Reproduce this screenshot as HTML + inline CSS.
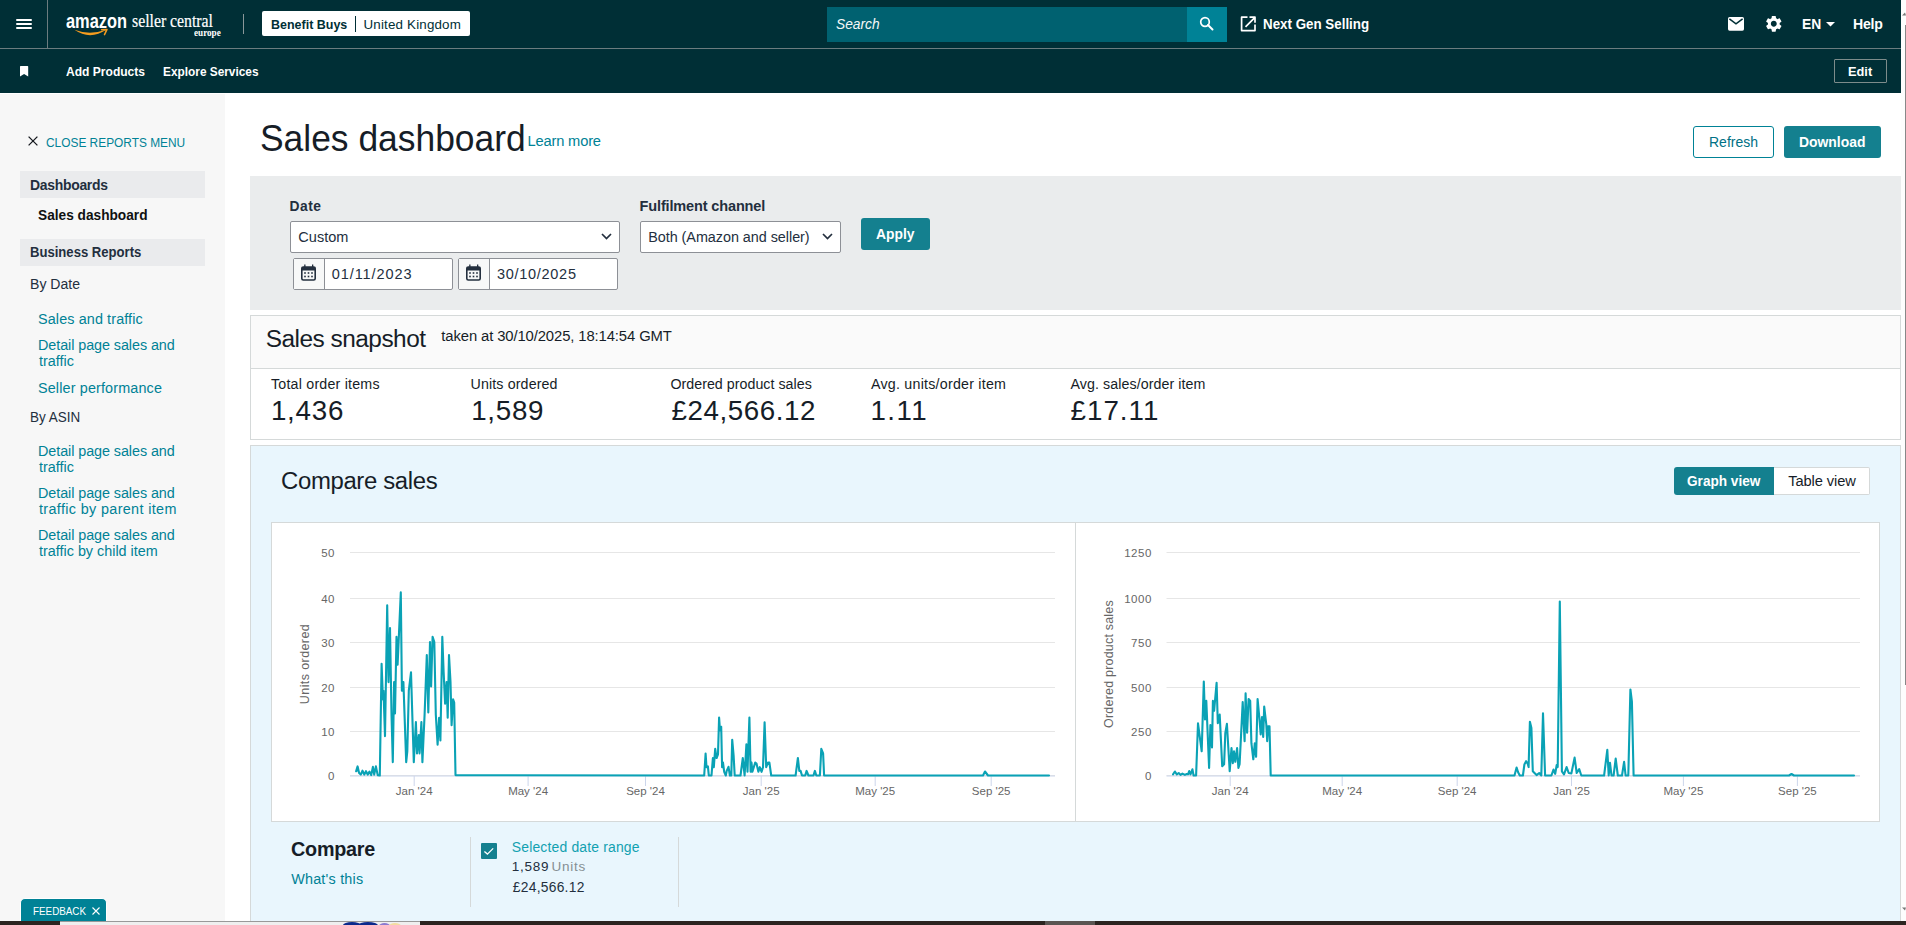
<!DOCTYPE html>
<html><head><meta charset="utf-8"><title>Sales dashboard</title>
<style>
html,body{margin:0;padding:0;width:1906px;height:925px;overflow:hidden;background:#fff;}
body{position:relative;font-family:"Liberation Sans",sans-serif;}
.a{position:absolute;}
.t{position:absolute;line-height:1;white-space:nowrap;}
svg{overflow:visible}
</style></head><body>
<div class="a" style="left:0px;top:0px;width:1901px;height:93px;background:#002f36"></div>
<div class="a" style="left:0px;top:48px;width:1901px;height:1px;background:#6c7c7f"></div>
<div class="a" style="left:47px;top:0px;width:1px;height:48px;background:#6c7c7f"></div>
<div class="a" style="left:16px;top:19px;width:16px;height:2px;background:#fff;border-radius:1px"></div>
<div class="a" style="left:16px;top:23px;width:16px;height:2px;background:#fff;border-radius:1px"></div>
<div class="a" style="left:16px;top:27px;width:16px;height:2px;background:#fff;border-radius:1px"></div>
<div class="t" style="left:66px;top:10.6px;font-size:20px;font-weight:700;color:#fff;transform:scaleX(0.82);transform-origin:0 0;">amazon</div>
<svg class="a" style="left:73px;top:27.6px" width="40" height="12" viewBox="0 0 40 12"><path d="M1.4 1.8 Q17 12.6 33.6 1.6 Q17 7.8 1.4 1.8 Z" fill="#f59c1f"/><path d="M28.6 1.7 L34 1.4 L31.5 6.6" stroke="#f59c1f" stroke-width="1.5" fill="none" stroke-linecap="round" stroke-linejoin="round"/></svg>
<div class="t" style="left:131.6px;top:11.1px;font-family:'Liberation Serif',serif;font-size:19px;color:#fff;transform:scaleX(0.83);transform-origin:0 0;-webkit-text-stroke:0.2px #fff;">seller central</div>
<div class="t" style="left:194px;top:26.7px;font-family:'Liberation Serif',serif;font-size:11px;font-weight:700;color:#fff;transform:scaleX(0.83);transform-origin:0 0;">europe</div>
<div class="a" style="left:243px;top:14px;width:1px;height:20px;background:#8a9799"></div>
<div class="a" style="left:262px;top:11px;width:208px;height:25px;background:#fff;border-radius:2px"></div>
<div class="t" style="left:270.70px;top:18px;color:#002f36;font-size:13.37px;font-weight:700;transform:scaleX(0.9339);transform-origin:0 0;">Benefit Buys</div>
<div class="a" style="left:355px;top:16px;width:1px;height:16px;background:#002f36"></div>
<div class="t" style="left:363.50px;top:18px;color:#002f36;font-size:13.37px;letter-spacing:0.177px;">United Kingdom</div>
<div class="a" style="left:827px;top:7px;width:360px;height:35px;background:#006170"></div>
<div class="a" style="left:1187px;top:7px;width:40px;height:35px;background:#008296"></div>
<div class="t" style="left:836.00px;top:17px;color:#f4f8f8;font-size:14.68px;font-style:italic;transform:scaleX(0.9371);transform-origin:0 0;">Search</div>
<svg class="a" style="left:1197px;top:14px" width="20" height="20" viewBox="0 0 20 20"><circle cx="8" cy="8" r="4.3" stroke="#fff" stroke-width="1.7" fill="none"/><path d="M11 11 L15.5 15.5" stroke="#fff" stroke-width="2" stroke-linecap="round"/></svg>
<svg class="a" style="left:1240px;top:16px" width="17" height="16" viewBox="0 0 17 16"><path d="M7.5 1.2 H1.6 V14.6 H15 V8.5" stroke="#fff" stroke-width="1.7" fill="none" stroke-linejoin="round"/><path d="M5.5 10.8 L14.5 1.8 M9.5 1.2 H15 V6.7" stroke="#fff" stroke-width="1.7" fill="none" stroke-linejoin="round"/></svg>
<div class="t" style="left:1263.30px;top:17px;color:#fff;font-size:14.83px;font-weight:700;transform:scaleX(0.9006);transform-origin:0 0;">Next Gen Selling</div>
<svg class="a" style="left:1728px;top:17px" width="16" height="14" viewBox="0 0 16 14"><rect x="0" y="0" width="16" height="13.7" rx="1.6" fill="#fff"/><path d="M1.4 1.9 L8 6.9 L14.6 1.9" stroke="#002f36" stroke-width="1.5" fill="none"/></svg>
<svg class="a" style="left:1764px;top:14.2px" width="19.6" height="19.6" viewBox="0 0 24 24"><path fill="#fff" d="M19.14 12.94c.04-.3.06-.61.06-.94 0-.32-.02-.64-.07-.94l2.03-1.58a.49.49 0 0 0 .12-.61l-1.92-3.32a.488.488 0 0 0-.59-.22l-2.39.96c-.5-.38-1.03-.7-1.62-.94l-.36-2.540a.484.484 0 0 0-.48-.41h-3.84c-.24 0-.43.17-.47.41l-.36 2.54c-.59.24-1.130.57-1.62.94l-2.39-.96c-.22-.08-.47 0-.59.22L2.74 8.87c-.12.21-.08.47.12.61l2.03 1.58c-.05.3-.09.63-.09.94s.02.64.07.94l-2.03 1.58a.49.49 0 0 0-.12.61l1.92 3.32c.12.22.37.29.59.22l2.39-.96c.5.38 1.03.7 1.62.94l.36 2.54c.05.24.24.41.48.41h3.84c.24 0 .44-.17.47-.41l.36-2.54c.59-.24 1.13-.56 1.62-.94l2.39.96c.22.08.47 0 .59-.22l1.92-3.32c.12-.22.07-.47-.12-.61l-2.010-1.58zM12 15.6c-1.98 0-3.6-1.62-3.6-3.6s1.62-3.6 3.6-3.6 3.6 1.62 3.6 3.6-1.62 3.6-3.6 3.6z"/></svg>
<div class="t" style="left:1801.90px;top:18px;color:#fff;font-size:13.95px;font-weight:700;transform:scaleX(0.9943);transform-origin:0 0;">EN</div>
<svg class="a" style="left:1825.5px;top:22px" width="9" height="5" viewBox="0 0 9 5"><path d="M0 0 H9 L4.5 4.5 Z" fill="#fff"/></svg>
<div class="t" style="left:1852.90px;top:17px;color:#fff;font-size:14.1px;font-weight:700;letter-spacing:-0.173px;">Help</div>
<svg class="a" style="left:20px;top:65.7px" width="8.2" height="11" viewBox="0 0 8.2 11"><path d="M0 0.5 Q0 0 0.5 0 H7.7 Q8.2 0 8.2 0.5 V10.5 L4.1 8 L0 10.5 Z" fill="#fff"/></svg>
<div class="t" style="left:66.10px;top:65px;color:#fff;font-size:13.23px;font-weight:700;transform:scaleX(0.9120);transform-origin:0 0;">Add Products</div>
<div class="t" style="left:162.60px;top:65px;color:#fff;font-size:13.23px;font-weight:700;transform:scaleX(0.8966);transform-origin:0 0;">Explore Services</div>
<div class="a" style="left:1834px;top:59px;width:53px;height:24px;border:1px solid #7d8c8b;box-sizing:border-box;border-radius:1px"></div>
<div class="t" style="left:1848.30px;top:65px;color:#fff;font-size:13.37px;font-weight:700;transform:scaleX(0.9569);transform-origin:0 0;">Edit</div>
<div class="a" style="left:1901px;top:0px;width:5px;height:925px;background:#fdfdfd"></div>
<div class="a" style="left:1905px;top:25px;width:1px;height:660px;background:#888"></div>
<svg class="a" style="left:1902px;top:12px" width="4" height="4" viewBox="0 0 4 4"><path d="M0 3.5 L3 0.5 L4 3.5Z" fill="#777"/></svg>
<svg class="a" style="left:1902px;top:907px" width="4" height="4" viewBox="0 0 4 4"><path d="M0 0.5 L3 3.5 L4 0.5Z" fill="#777"/></svg>
<div class="a" style="left:0px;top:94px;width:225px;height:831px;background:#f7f7f7"></div>
<svg class="a" style="left:28px;top:136px" width="10" height="10" viewBox="0 0 10 10"><path d="M0.6 0.6 L9.4 9.4 M9.4 0.6 L0.6 9.4" stroke="#16191f" stroke-width="1.3"/></svg>
<div class="t" style="left:45.90px;top:136px;color:#008296;font-size:13.08px;transform:scaleX(0.9093);transform-origin:0 0;">CLOSE REPORTS MENU</div>
<div class="a" style="left:20px;top:171px;width:185px;height:27px;background:#eaebed"></div>
<div class="t" style="left:30.00px;top:179px;color:#232f3e;font-size:13.95px;font-weight:700;letter-spacing:-0.285px;">Dashboards</div>
<div class="t" style="left:37.80px;top:208px;color:#0f1111;font-size:14.53px;font-weight:700;transform:scaleX(0.9428);transform-origin:0 0;">Sales dashboard</div>
<div class="a" style="left:20px;top:239px;width:185px;height:27px;background:#eaebed"></div>
<div class="t" style="left:29.60px;top:245px;color:#232f3e;font-size:14.24px;font-weight:700;transform:scaleX(0.9196);transform-origin:0 0;">Business Reports</div>
<div class="t" style="left:29.70px;top:277px;color:#232f3e;font-size:14.53px;transform:scaleX(0.9691);transform-origin:0 0;">By Date</div>
<div class="t" style="left:38.00px;top:312px;color:#008296;font-size:14.39px;letter-spacing:0.119px;">Sales and traffic</div>
<div class="t" style="left:38.00px;top:338px;color:#008296;font-size:14.39px;letter-spacing:-0.074px;">Detail page sales and</div>
<div class="t" style="left:39.00px;top:354px;color:#008296;font-size:14.39px;">traffic</div>
<div class="t" style="left:38.00px;top:381px;color:#008296;font-size:14.39px;letter-spacing:0.145px;">Seller performance</div>
<div class="t" style="left:29.60px;top:411px;color:#232f3e;font-size:13.95px;transform:scaleX(0.9654);transform-origin:0 0;">By ASIN</div>
<div class="t" style="left:38.00px;top:444px;color:#008296;font-size:14.39px;letter-spacing:-0.074px;">Detail page sales and</div>
<div class="t" style="left:39.00px;top:460px;color:#008296;font-size:14.39px;">traffic</div>
<div class="t" style="left:38.00px;top:486px;color:#008296;font-size:14.39px;letter-spacing:-0.074px;">Detail page sales and</div>
<div class="t" style="left:39.00px;top:502px;color:#008296;font-size:14.39px;letter-spacing:0.353px;">traffic by parent item</div>
<div class="t" style="left:38.00px;top:528px;color:#008296;font-size:14.39px;letter-spacing:-0.074px;">Detail page sales and</div>
<div class="t" style="left:39.00px;top:544px;color:#008296;font-size:14.39px;">traffic by child item</div>
<div class="t" style="left:259.60px;top:120px;color:#161d27;font-size:37.5px;transform:scaleX(0.9440);transform-origin:0 0;">Sales dashboard</div>
<div class="t" style="left:527.60px;top:134px;color:#008296;font-size:14.68px;letter-spacing:-0.181px;">Learn more</div>
<div class="a" style="left:1693px;top:126px;width:81px;height:32px;border:1px solid #008296;border-radius:3px;box-sizing:border-box;background:#fff"></div>
<div class="t" style="left:1708.90px;top:135px;color:#007185;font-size:14.97px;transform:scaleX(0.9348);transform-origin:0 0;">Refresh</div>
<div class="a" style="left:1784px;top:126px;width:97px;height:32px;background:#14808f;border-radius:3px"></div>
<div class="t" style="left:1799.20px;top:135px;color:#fff;font-size:14.97px;font-weight:700;transform:scaleX(0.9292);transform-origin:0 0;">Download</div>
<div class="a" style="left:250px;top:176px;width:1651px;height:134px;background:#eaeced"></div>
<div class="t" style="left:289.60px;top:200px;color:#232f3e;font-size:13.81px;font-weight:700;letter-spacing:0.452px;">Date</div>
<div class="a" style="left:290px;top:221px;width:330px;height:32px;background:#fff;border:1px solid #8d9096;border-radius:2px;box-sizing:border-box"></div>
<div class="t" style="left:298.30px;top:230px;color:#232f3e;font-size:14.53px;letter-spacing:0.029px;">Custom</div>
<svg class="a" style="left:600.5px;top:232.5px" width="11" height="7" viewBox="0 0 11 7"><path d="M1 1 L5.5 5.5 L10 1" stroke="#232f3e" stroke-width="1.7" fill="none"/></svg>
<div class="a" style="left:293px;top:258px;width:160px;height:32px;background:#fff;border:1px solid #8d9096;border-radius:2px;box-sizing:border-box"></div>
<div class="a" style="left:294px;top:259px;width:30px;height:30px;background:#f7f8f8"></div>
<div class="a" style="left:324px;top:259px;width:1px;height:30px;background:#8d9096"></div>
<svg class="a" style="left:301px;top:264px" width="15" height="17" viewBox="0 0 15 17"><rect x="0.8" y="3" width="13.4" height="13" rx="1.5" fill="none" stroke="#232f3e" stroke-width="1.6"/><rect x="0.8" y="3" width="13.4" height="3.5" fill="#232f3e"/><rect x="3.2" y="0.5" width="1.3" height="3.5" fill="#232f3e"/><rect x="11" y="0.5" width="1.3" height="3.5" fill="#232f3e"/><g fill="#232f3e"><rect x="3.2" y="8.2" width="1.6" height="1.6"/><rect x="6.7" y="8.2" width="1.6" height="1.6"/><rect x="10.2" y="8.2" width="1.6" height="1.6"/><rect x="3.2" y="11.7" width="1.6" height="1.6"/><rect x="6.7" y="11.7" width="1.6" height="1.6"/><rect x="10.2" y="11.7" width="1.6" height="1.6"/></g></svg>
<div class="t" style="left:331.70px;top:267px;color:#232f3e;font-size:14.53px;letter-spacing:0.934px;">01/11/2023</div>
<div class="a" style="left:458px;top:258px;width:160px;height:32px;background:#fff;border:1px solid #8d9096;border-radius:2px;box-sizing:border-box"></div>
<div class="a" style="left:459px;top:259px;width:30px;height:30px;background:#f7f8f8"></div>
<div class="a" style="left:489px;top:259px;width:1px;height:30px;background:#8d9096"></div>
<svg class="a" style="left:466px;top:264px" width="15" height="17" viewBox="0 0 15 17"><rect x="0.8" y="3" width="13.4" height="13" rx="1.5" fill="none" stroke="#232f3e" stroke-width="1.6"/><rect x="0.8" y="3" width="13.4" height="3.5" fill="#232f3e"/><rect x="3.2" y="0.5" width="1.3" height="3.5" fill="#232f3e"/><rect x="11" y="0.5" width="1.3" height="3.5" fill="#232f3e"/><g fill="#232f3e"><rect x="3.2" y="8.2" width="1.6" height="1.6"/><rect x="6.7" y="8.2" width="1.6" height="1.6"/><rect x="10.2" y="8.2" width="1.6" height="1.6"/><rect x="3.2" y="11.7" width="1.6" height="1.6"/><rect x="6.7" y="11.7" width="1.6" height="1.6"/><rect x="10.2" y="11.7" width="1.6" height="1.6"/></g></svg>
<div class="t" style="left:497.00px;top:267px;color:#232f3e;font-size:14.53px;letter-spacing:0.702px;">30/10/2025</div>
<div class="t" style="left:639.60px;top:199px;color:#232f3e;font-size:14.53px;font-weight:700;letter-spacing:-0.149px;">Fulfilment channel</div>
<div class="a" style="left:640px;top:221px;width:201px;height:32px;background:#fff;border:1px solid #8d9096;border-radius:2px;box-sizing:border-box"></div>
<div class="t" style="left:648.20px;top:230px;color:#232f3e;font-size:14.39px;letter-spacing:-0.032px;">Both (Amazon and seller)</div>
<svg class="a" style="left:821.5px;top:233px" width="11" height="7" viewBox="0 0 11 7"><path d="M1 1 L5.5 5.5 L10 1" stroke="#232f3e" stroke-width="1.7" fill="none"/></svg>
<div class="a" style="left:861px;top:218px;width:69px;height:32px;background:#14808f;border-radius:3px"></div>
<div class="t" style="left:876.00px;top:227px;color:#fff;font-size:14.97px;font-weight:700;transform:scaleX(0.9247);transform-origin:0 0;">Apply</div>
<div class="a" style="left:250px;top:315px;width:1651px;height:125px;background:#fff;border:1px solid #d5d9d9;box-sizing:border-box"></div>
<div class="a" style="left:251px;top:316px;width:1649px;height:52px;background:#fafafa"></div>
<div class="a" style="left:251px;top:368px;width:1649px;height:1px;background:#d5d9d9"></div>
<div class="t" style="left:265.80px;top:327px;color:#161d27;font-size:24.42px;letter-spacing:-0.514px;">Sales snapshot</div>
<div class="t" style="left:441.30px;top:329px;color:#161d27;font-size:14.83px;letter-spacing:-0.111px;">taken at 30/10/2025, 18:14:54 GMT</div>
<div class="t" style="left:271.00px;top:377px;color:#161d27;font-size:14.24px;letter-spacing:0.209px;">Total order items</div>
<div class="t" style="left:270.90px;top:397px;color:#161d27;font-size:27.76px;letter-spacing:0.749px;">1,436</div>
<div class="t" style="left:470.50px;top:377px;color:#161d27;font-size:14.24px;letter-spacing:0.130px;">Units ordered</div>
<div class="t" style="left:471.20px;top:397px;color:#161d27;font-size:27.76px;letter-spacing:0.724px;">1,589</div>
<div class="t" style="left:670.40px;top:377px;color:#161d27;font-size:14.24px;letter-spacing:0.027px;">Ordered product sales</div>
<div class="t" style="left:671.60px;top:397px;color:#161d27;font-size:27.76px;letter-spacing:0.545px;">£24,566.12</div>
<div class="t" style="left:871.00px;top:377px;color:#161d27;font-size:14.24px;letter-spacing:0.234px;">Avg. units/order item</div>
<div class="t" style="left:870.50px;top:397px;color:#161d27;font-size:27.76px;letter-spacing:1.393px;">1.11</div>
<div class="t" style="left:1070.50px;top:377px;color:#161d27;font-size:14.24px;letter-spacing:0.075px;">Avg. sales/order item</div>
<div class="t" style="left:1070.60px;top:397px;color:#161d27;font-size:27.76px;letter-spacing:0.981px;">£17.11</div>
<div class="a" style="left:250px;top:445px;width:1651px;height:480px;background:#e9f6fd;border:1px solid #d5d9d9;border-bottom:none;box-sizing:border-box"></div>
<div class="t" style="left:281.00px;top:469px;color:#161d27;font-size:23.91px;letter-spacing:-0.339px;">Compare sales</div>
<div class="a" style="left:1674px;top:467px;width:100px;height:28px;background:#14808f;border-radius:3px 0 0 3px"></div>
<div class="t" style="left:1687.30px;top:474px;color:#fff;font-size:14.68px;font-weight:700;transform:scaleX(0.9275);transform-origin:0 0;">Graph view</div>
<div class="a" style="left:1774px;top:467px;width:96px;height:28px;background:#fff;border:1px solid #d5d9d9;border-left:none;border-radius:0 2px 2px 0;box-sizing:border-box"></div>
<div class="t" style="left:1788.30px;top:474px;color:#161d27;font-size:14.68px;letter-spacing:-0.109px;">Table view</div>
<div class="a" style="left:271px;top:522px;width:1609px;height:300px;background:#fff;border:1px solid #d5d9d9;box-sizing:border-box"></div>
<div class="a" style="left:1075px;top:523px;width:1px;height:298px;background:#d5d9d9"></div>
<svg class="a" style="left:0;top:0" width="1906" height="925" viewBox="0 0 1906 925" font-family="Liberation Sans, sans-serif"><line x1="350" y1="552.5" x2="1055" y2="552.5" stroke="#e6e6e6" stroke-width="1"/><line x1="350" y1="598.5" x2="1055" y2="598.5" stroke="#e6e6e6" stroke-width="1"/><line x1="350" y1="642.5" x2="1055" y2="642.5" stroke="#e6e6e6" stroke-width="1"/><line x1="350" y1="687.5" x2="1055" y2="687.5" stroke="#e6e6e6" stroke-width="1"/><line x1="350" y1="731.5" x2="1055" y2="731.5" stroke="#e6e6e6" stroke-width="1"/><line x1="350" y1="775.5" x2="1055" y2="775.5" stroke="#e6e6e6" stroke-width="1"/><line x1="350" y1="776" x2="1055" y2="776" stroke="#ccd6eb" stroke-width="1"/><text x="335" y="557.1" text-anchor="end" font-size="11.5" fill="#666666" letter-spacing="0.5">50</text><text x="335" y="603.1" text-anchor="end" font-size="11.5" fill="#666666" letter-spacing="0.5">40</text><text x="335" y="647.1" text-anchor="end" font-size="11.5" fill="#666666" letter-spacing="0.5">30</text><text x="335" y="692.1" text-anchor="end" font-size="11.5" fill="#666666" letter-spacing="0.5">20</text><text x="335" y="736.1" text-anchor="end" font-size="11.5" fill="#666666" letter-spacing="0.5">10</text><text x="335" y="780.1" text-anchor="end" font-size="11.5" fill="#666666" letter-spacing="0.5">0</text><line x1="414.2" y1="776" x2="414.2" y2="786" stroke="#ccd6eb" stroke-width="1"/><text x="414.2" y="795" text-anchor="middle" font-size="11.5" fill="#666666">Jan '24</text><line x1="528.1" y1="776" x2="528.1" y2="786" stroke="#ccd6eb" stroke-width="1"/><text x="528.1" y="795" text-anchor="middle" font-size="11.5" fill="#666666">May '24</text><line x1="645.5" y1="776" x2="645.5" y2="786" stroke="#ccd6eb" stroke-width="1"/><text x="645.5" y="795" text-anchor="middle" font-size="11.5" fill="#666666">Sep '24</text><line x1="761.2" y1="776" x2="761.2" y2="786" stroke="#ccd6eb" stroke-width="1"/><text x="761.2" y="795" text-anchor="middle" font-size="11.5" fill="#666666">Jan '25</text><line x1="875.2" y1="776" x2="875.2" y2="786" stroke="#ccd6eb" stroke-width="1"/><text x="875.2" y="795" text-anchor="middle" font-size="11.5" fill="#666666">May '25</text><line x1="991.2" y1="776" x2="991.2" y2="786" stroke="#ccd6eb" stroke-width="1"/><text x="991.2" y="795" text-anchor="middle" font-size="11.5" fill="#666666">Sep '25</text><text transform="translate(308.5,664) rotate(-90)" text-anchor="middle" font-size="12.5" fill="#666666" letter-spacing="0.4">Units ordered</text><path d="M356.5 771.0 L356.1 771.2 L357.6 766.4 L359.1 772.9 L360.8 774.6 L362.5 770.7 L364.3 774.6 L366.0 771.2 L367.7 774.6 L369.5 771.6 L371.2 775.1 L372.9 766.9 L374.2 774.6 L375.9 766.4 L377.7 775.1 L379.8 775.5 L381.6 663.7 L382.9 699.4 L383.5 690.7 L385.0 736.1 L387.2 605.3 L388.5 682.1 L390.0 628.0 L391.5 714.5 L392.8 762.1 L394.1 682.1 L395.0 713.4 L396.5 636.7 L397.6 664.8 L400.8 592.4 L401.9 690.7 L403.4 682.1 L406.2 762.1 L407.3 751.3 L408.8 690.7 L411.0 672.4 L412.7 727.5 L413.8 762.1 L415.9 722.1 L417.0 753.4 L418.8 735.1 L419.6 753.4 L421.4 722.1 L422.4 762.1 L424.6 714.5 L426.8 655.1 L428.3 712.4 L430.0 642.1 L431.1 686.4 L432.6 636.7 L434.3 642.1 L435.8 714.5 L437.6 744.8 L439.1 717.8 L440.4 740.5 L442.3 636.7 L443.6 671.3 L445.1 703.7 L446.6 682.1 L447.7 717.8 L449.0 655.1 L450.5 682.1 L451.6 725.3 L453.1 699.4 L454.2 702.6 L455.5 775.1 L704.2 775.5 L705.6 753.5 L706.5 767.2 L707.9 766.3 L708.8 775.5 L711.5 775.5 L712.9 758.0 L713.8 767.2 L715.2 748.9 L716.6 758.0 L718.0 754.4 L719.1 717.6 L720.0 730.5 L721.2 726.8 L722.1 767.2 L723.0 762.6 L724.2 771.8 L725.8 775.5 L726.7 770.9 L728.5 766.8 L729.9 775.5 L731.3 775.5 L732.2 739.7 L733.6 755.3 L734.7 775.5 L740.5 775.5 L742.8 758.0 L744.6 775.5 L746.4 744.3 L747.5 771.8 L749.4 717.6 L750.6 771.8 L751.5 762.6 L752.4 771.8 L755.2 762.6 L756.5 763.6 L758.4 771.8 L759.8 767.2 L761.6 771.8 L763.0 767.2 L764.6 722.2 L766.2 767.2 L768.0 762.6 L769.4 762.6 L771.2 775.5 L795.6 775.5 L797.9 758.0 L799.3 770.9 L800.6 770.9 L802.0 775.5 L805.2 775.5 L806.6 770.9 L808.4 775.5 L813.5 775.5 L814.9 770.9 L816.3 775.5 L819.9 775.5 L821.3 748.9 L823.1 753.5 L824.1 775.5 L983.0 775.5 L985.0 771.5 L988.0 775.5 L1049.0 775.5" fill="none" stroke="#0aa2b5" stroke-width="2.1" stroke-linejoin="round" stroke-linecap="round"/><line x1="1166.5" y1="552.5" x2="1860" y2="552.5" stroke="#e6e6e6" stroke-width="1"/><line x1="1166.5" y1="598.5" x2="1860" y2="598.5" stroke="#e6e6e6" stroke-width="1"/><line x1="1166.5" y1="642.5" x2="1860" y2="642.5" stroke="#e6e6e6" stroke-width="1"/><line x1="1166.5" y1="687.5" x2="1860" y2="687.5" stroke="#e6e6e6" stroke-width="1"/><line x1="1166.5" y1="731.5" x2="1860" y2="731.5" stroke="#e6e6e6" stroke-width="1"/><line x1="1166.5" y1="775.5" x2="1860" y2="775.5" stroke="#e6e6e6" stroke-width="1"/><line x1="1166.5" y1="776" x2="1860" y2="776" stroke="#ccd6eb" stroke-width="1"/><text x="1151.8" y="557.1" text-anchor="end" font-size="11.5" fill="#666666" letter-spacing="0.5">1250</text><text x="1151.8" y="603.1" text-anchor="end" font-size="11.5" fill="#666666" letter-spacing="0.5">1000</text><text x="1151.8" y="647.1" text-anchor="end" font-size="11.5" fill="#666666" letter-spacing="0.5">750</text><text x="1151.8" y="692.1" text-anchor="end" font-size="11.5" fill="#666666" letter-spacing="0.5">500</text><text x="1151.8" y="736.1" text-anchor="end" font-size="11.5" fill="#666666" letter-spacing="0.5">250</text><text x="1151.8" y="780.1" text-anchor="end" font-size="11.5" fill="#666666" letter-spacing="0.5">0</text><line x1="1230.2" y1="776" x2="1230.2" y2="786" stroke="#ccd6eb" stroke-width="1"/><text x="1230.2" y="795" text-anchor="middle" font-size="11.5" fill="#666666">Jan '24</text><line x1="1342.2" y1="776" x2="1342.2" y2="786" stroke="#ccd6eb" stroke-width="1"/><text x="1342.2" y="795" text-anchor="middle" font-size="11.5" fill="#666666">May '24</text><line x1="1457.2" y1="776" x2="1457.2" y2="786" stroke="#ccd6eb" stroke-width="1"/><text x="1457.2" y="795" text-anchor="middle" font-size="11.5" fill="#666666">Sep '24</text><line x1="1571.5" y1="776" x2="1571.5" y2="786" stroke="#ccd6eb" stroke-width="1"/><text x="1571.5" y="795" text-anchor="middle" font-size="11.5" fill="#666666">Jan '25</text><line x1="1683.4" y1="776" x2="1683.4" y2="786" stroke="#ccd6eb" stroke-width="1"/><text x="1683.4" y="795" text-anchor="middle" font-size="11.5" fill="#666666">May '25</text><line x1="1797.4" y1="776" x2="1797.4" y2="786" stroke="#ccd6eb" stroke-width="1"/><text x="1797.4" y="795" text-anchor="middle" font-size="11.5" fill="#666666">Sep '25</text><text transform="translate(1112.5,664) rotate(-90)" text-anchor="middle" font-size="12.5" fill="#666666" letter-spacing="0.2">Ordered product sales</text><path d="M1173.1 774.3 L1174.9 771.5 L1176.8 774.3 L1178.7 773.0 L1180.5 774.9 L1182.4 773.6 L1184.9 774.9 L1186.8 774.0 L1188.0 774.3 L1189.2 771.1 L1190.5 774.3 L1192.4 769.3 L1193.6 775.5 L1196.1 775.5 L1198.0 723.3 L1201.7 751.3 L1203.8 681.6 L1205.0 719.5 L1206.3 700.9 L1209.1 768.0 L1210.4 725.1 L1212.0 747.5 L1212.9 700.9 L1214.1 710.8 L1216.6 682.9 L1217.8 723.3 L1219.7 714.6 L1222.2 766.2 L1224.1 764.3 L1225.3 733.2 L1226.9 723.9 L1229.7 771.1 L1231.5 748.1 L1232.8 763.1 L1234.0 751.3 L1235.3 761.8 L1237.1 748.1 L1238.4 768.0 L1239.6 764.3 L1242.7 702.1 L1244.6 741.3 L1245.6 693.4 L1247.1 732.6 L1248.6 699.0 L1250.2 700.9 L1251.4 743.2 L1253.3 759.3 L1254.8 743.2 L1256.1 756.8 L1257.6 699.0 L1259.5 719.5 L1260.7 734.5 L1262.0 717.1 L1263.2 737.0 L1264.2 706.5 L1266.3 724.5 L1267.2 741.3 L1268.2 726.4 L1269.5 726.4 L1270.7 775.5 L1514.5 775.5 L1516.6 767.5 L1518.1 772.3 L1519.8 775.5 L1522.9 775.5 L1524.4 764.5 L1526.1 761.2 L1527.8 763.9 L1528.6 767.1 L1529.9 721.7 L1531.4 728.1 L1532.8 771.3 L1534.5 773.0 L1536.6 775.1 L1539.2 773.0 L1541.3 775.5 L1543.0 713.3 L1545.1 775.5 L1551.4 775.5 L1553.5 769.6 L1555.2 773.8 L1556.7 765.0 L1557.7 767.1 L1559.8 601.6 L1561.9 771.3 L1564.0 774.4 L1566.6 767.1 L1568.7 773.0 L1571.4 773.4 L1574.6 757.6 L1576.7 773.0 L1579.2 769.2 L1581.3 775.5 L1604.1 775.5 L1607.3 749.8 L1608.7 775.5 L1610.0 762.8 L1611.5 775.5 L1613.6 775.5 L1615.7 758.6 L1617.8 775.5 L1622.0 775.5 L1624.1 761.8 L1625.6 775.5 L1628.3 775.5 L1630.4 689.5 L1631.9 701.7 L1633.6 775.5 L1789.0 775.5 L1791.5 774.0 L1794.0 775.5 L1854.0 775.5" fill="none" stroke="#0aa2b5" stroke-width="2.1" stroke-linejoin="round" stroke-linecap="round"/></svg>
<div class="t" style="left:291.10px;top:840px;color:#161d27;font-size:19.77px;font-weight:700;letter-spacing:-0.259px;">Compare</div>
<div class="t" style="left:291.20px;top:872px;color:#008296;font-size:14.39px;letter-spacing:0.209px;">What's this</div>
<div class="a" style="left:470px;top:837px;width:1px;height:70px;background:#d5d9d9"></div>
<div class="a" style="left:678px;top:837px;width:1px;height:70px;background:#d5d9d9"></div>
<div class="a" style="left:481px;top:843px;width:16px;height:16px;background:#14808f;border-radius:1px"></div>
<svg class="a" style="left:481px;top:843px" width="16" height="16" viewBox="0 0 16 16"><path d="M3.4 8.4 L6.4 11.1 L12.2 5.4" stroke="#fff" stroke-width="1.3" fill="none"/></svg>
<div class="t" style="left:511.80px;top:841px;color:#12a1b1;font-size:13.95px;letter-spacing:0.165px;">Selected date range</div>
<div class="t" style="left:511.80px;top:860px;color:#232f3e;font-size:13.52px;letter-spacing:0.744px;">1,589</div>
<div class="t" style="left:551.40px;top:860px;color:#858f93;font-size:13.52px;letter-spacing:0.767px;">Units</div>
<div class="t" style="left:512.80px;top:881px;color:#232f3e;font-size:13.81px;letter-spacing:0.276px;">£24,566.12</div>
<div class="a" style="left:20px;top:898px;width:87px;height:24px;background:#008296;border:1px solid #fff;border-bottom:none;border-radius:5px 5px 0 0;box-sizing:border-box"></div>
<div class="t" style="left:32.60px;top:906px;color:#fff;font-size:10.61px;transform:scaleX(0.9271);transform-origin:0 0;">FEEDBACK</div>
<svg class="a" style="left:92px;top:907px" width="8" height="8" viewBox="0 0 8 8"><path d="M0.5 0.5 L7.5 7.5 M7.5 0.5 L0.5 7.5" stroke="#fff" stroke-width="1.1"/></svg>
<div class="a" style="left:0px;top:921px;width:1906px;height:4px;background:#2c2420"></div>
<div class="a" style="left:60px;top:921px;width:360px;height:4px;background:#efefef;border-top:1px solid #999;box-sizing:border-box"></div>
<div class="a" style="left:343px;top:922px;width:18px;height:6px;background:#0b2a8c;border-radius:50%"></div>
<div class="a" style="left:358px;top:921.5px;width:20px;height:7px;background:#0b2a8c;border-radius:50%"></div>
<div class="a" style="left:379px;top:922.5px;width:11px;height:6px;background:#8a7ad0;border-radius:50%"></div>
<div class="a" style="left:389px;top:922.5px;width:12px;height:6px;background:#f3dca0;border-radius:50%"></div>
<div class="a" style="left:1045px;top:921px;width:50px;height:4px;background:#5a5552"></div>
</body></html>
